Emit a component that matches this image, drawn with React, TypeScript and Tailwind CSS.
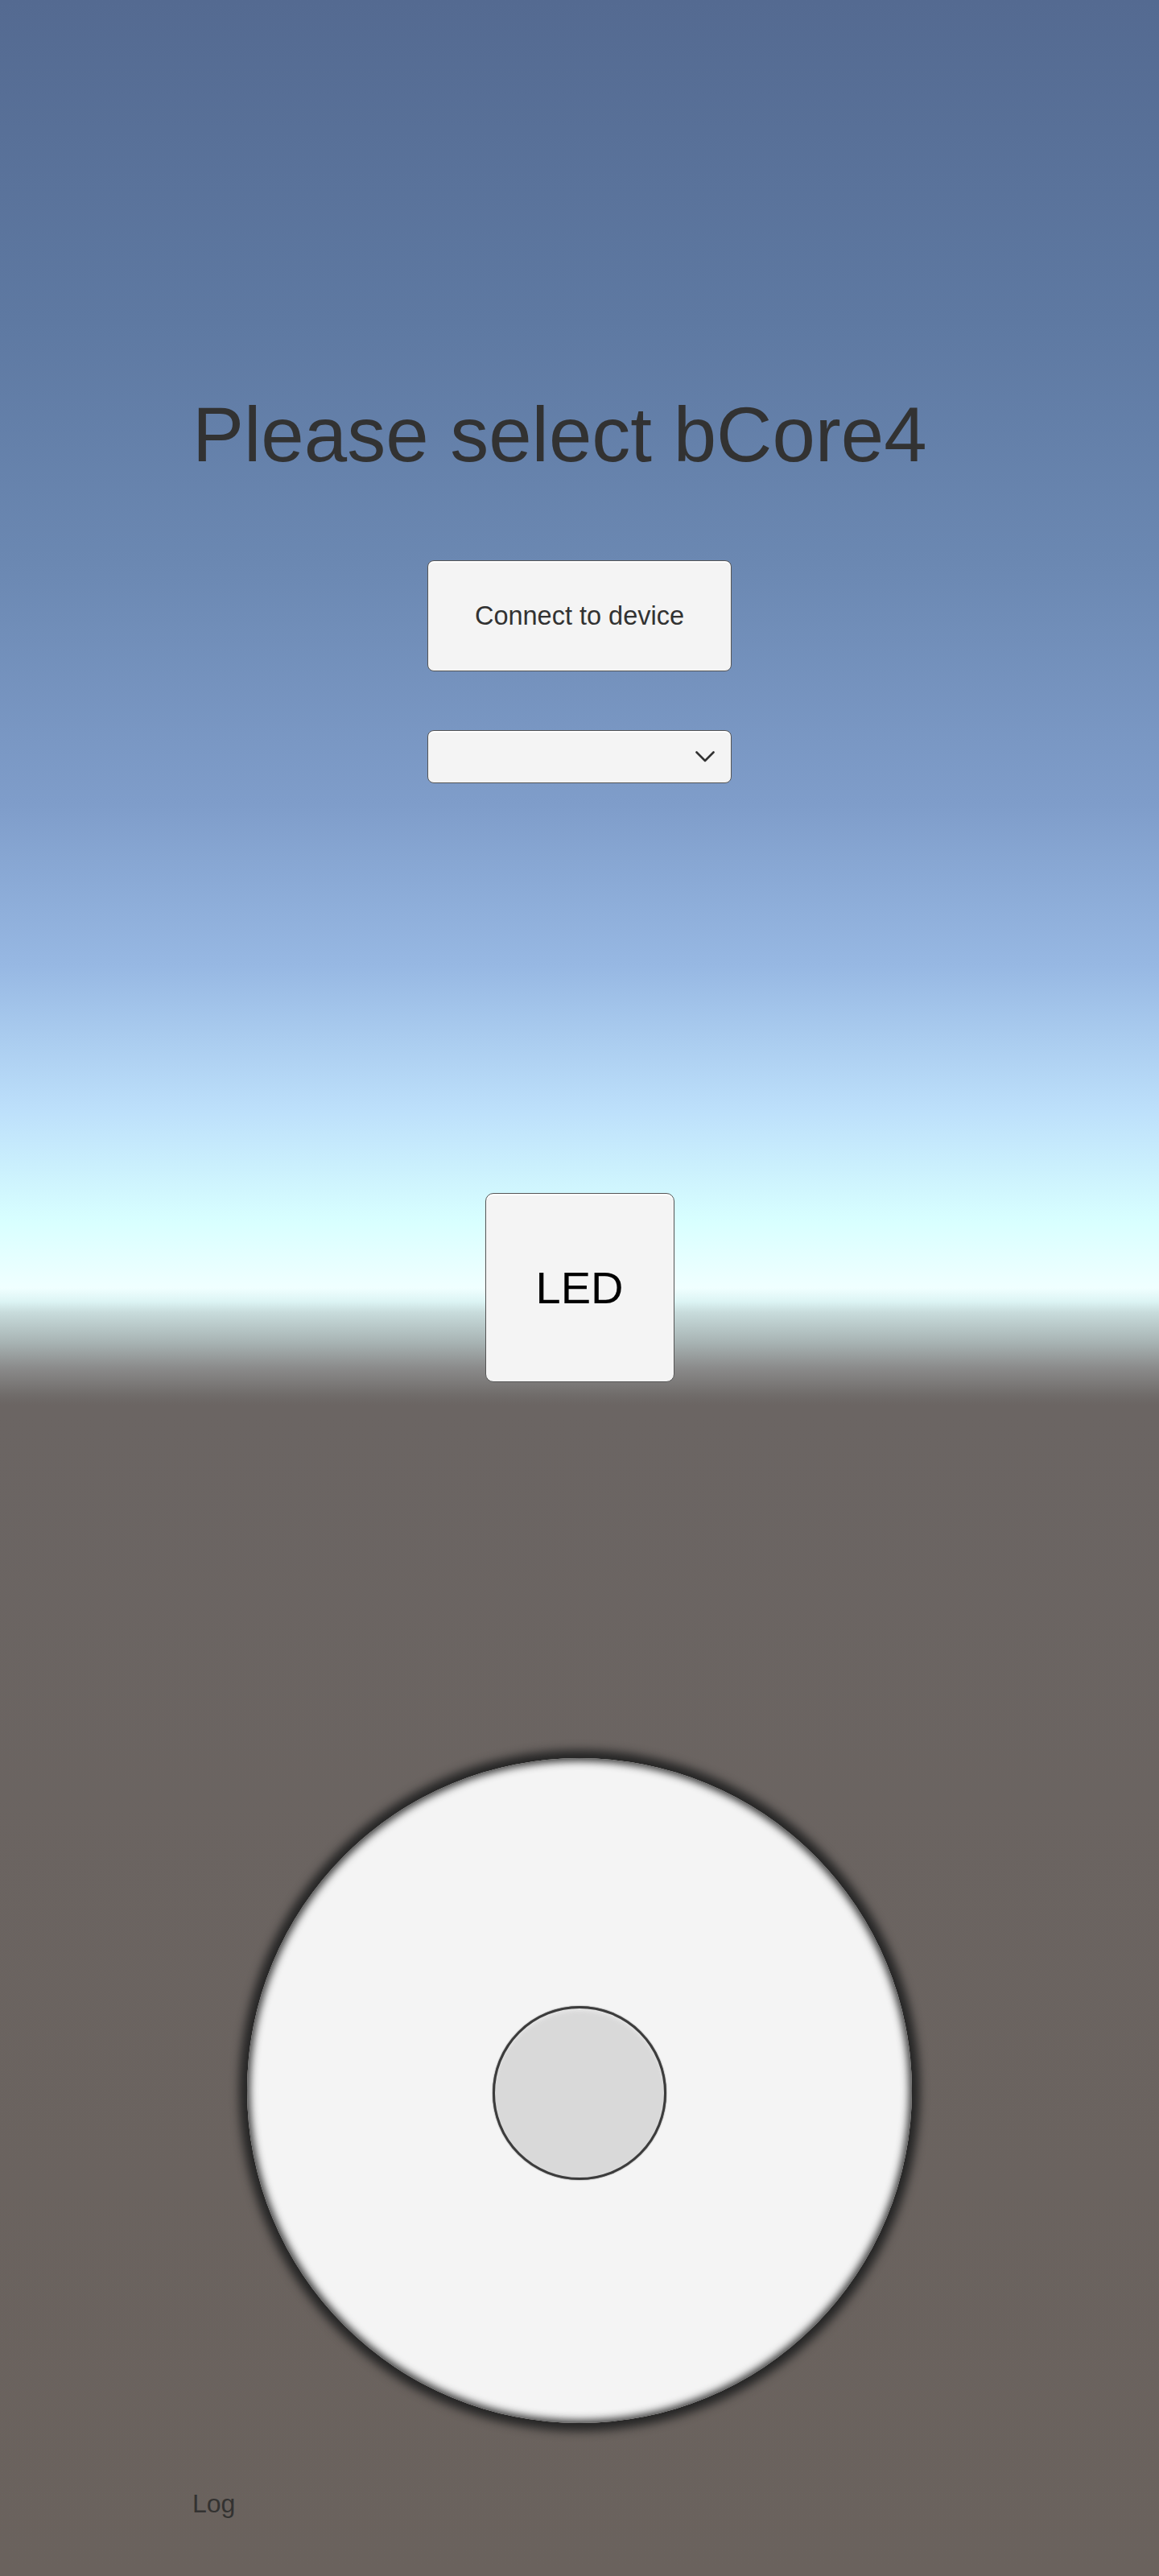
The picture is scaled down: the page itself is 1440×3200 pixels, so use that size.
const font = { fontFamily: '"Liberation Sans", Arial, sans-serif' };

function Panel({ className, children }: { className: string; children?: React.ReactNode }) {
  return (
    <div
      className={`bg-[#f4f4f4] border-[1.5px] border-[#555555] shadow-[inset_0_2px_0_#ffffff] ${className}`}
    >
      {children}
    </div>
  );
}

function Joystick() {
  return (
    <div className="mx-auto mt-[467px] w-[826px] h-[826px] rounded-full flex items-center justify-center bg-[radial-gradient(circle_at_50%_56%,#f4f4f4_78%,#ffffff_91%)] shadow-[0_0_12px_10px_#262626,inset_0_0_10px_4px_rgba(38,38,38,0.85)]">
      <div className="mt-[6px] w-[216px] h-[216px] rounded-full bg-[#d9d9d9] border-[3.5px] border-[#3c3c3c] shadow-[inset_0_6px_6px_-4px_#ececec,0_0_1.5px_#3c3c3c]" />
    </div>
  );
}

export default function App() {
  return (
    <div
      style={font}
      className="min-h-[3200px] w-full flex flex-col pt-[492px] bg-[linear-gradient(to_bottom,#546a91_0px,#5e79a2_400px,#6b88b2_700px,#7f9dca_1000px,#97b8e3_1200px,#bde0fb_1380px,#d8ffff_1517px,#f0ffff_1600px,#dcf4f4_1617px,#c8dcdc_1630px,#a8b4b4_1667px,#8a8a8a_1700px,#706c6a_1733px,#6b6563_1745px,#6a625d_3200px)]"
    >
      <h1 className="pl-[239px] text-[96px] leading-none text-[#323232] whitespace-nowrap">
        Please select bCore4
      </h1>

      <Panel className="mx-auto mt-[108px] w-[378px] h-[138px] rounded-[8px] flex items-center justify-center">
        <span className="text-[32.5px] leading-none text-[#323232]">Connect to device</span>
      </Panel>

      <Panel className="mx-auto mt-[73px] w-[378px] h-[66px] rounded-[8px] flex items-center justify-end pr-[20px]">
        <svg width="24" height="14" viewBox="0 0 24 14" fill="none">
          <polyline
            points="1.5,1.5 12,12 22.5,1.5"
            stroke="#323232"
            strokeWidth="2.6"
            strokeLinecap="round"
            strokeLinejoin="round"
          />
        </svg>
      </Panel>

      <Panel className="mx-auto mt-[509px] w-[235px] h-[235px] rounded-[10px] flex items-center justify-center">
        <span className="text-[56px] leading-none text-black">LED</span>
      </Panel>

      <Joystick />

      <p className="pl-[239px] mt-[84px] text-[32px] leading-none text-[#333231]">Log</p>
    </div>
  );
}
